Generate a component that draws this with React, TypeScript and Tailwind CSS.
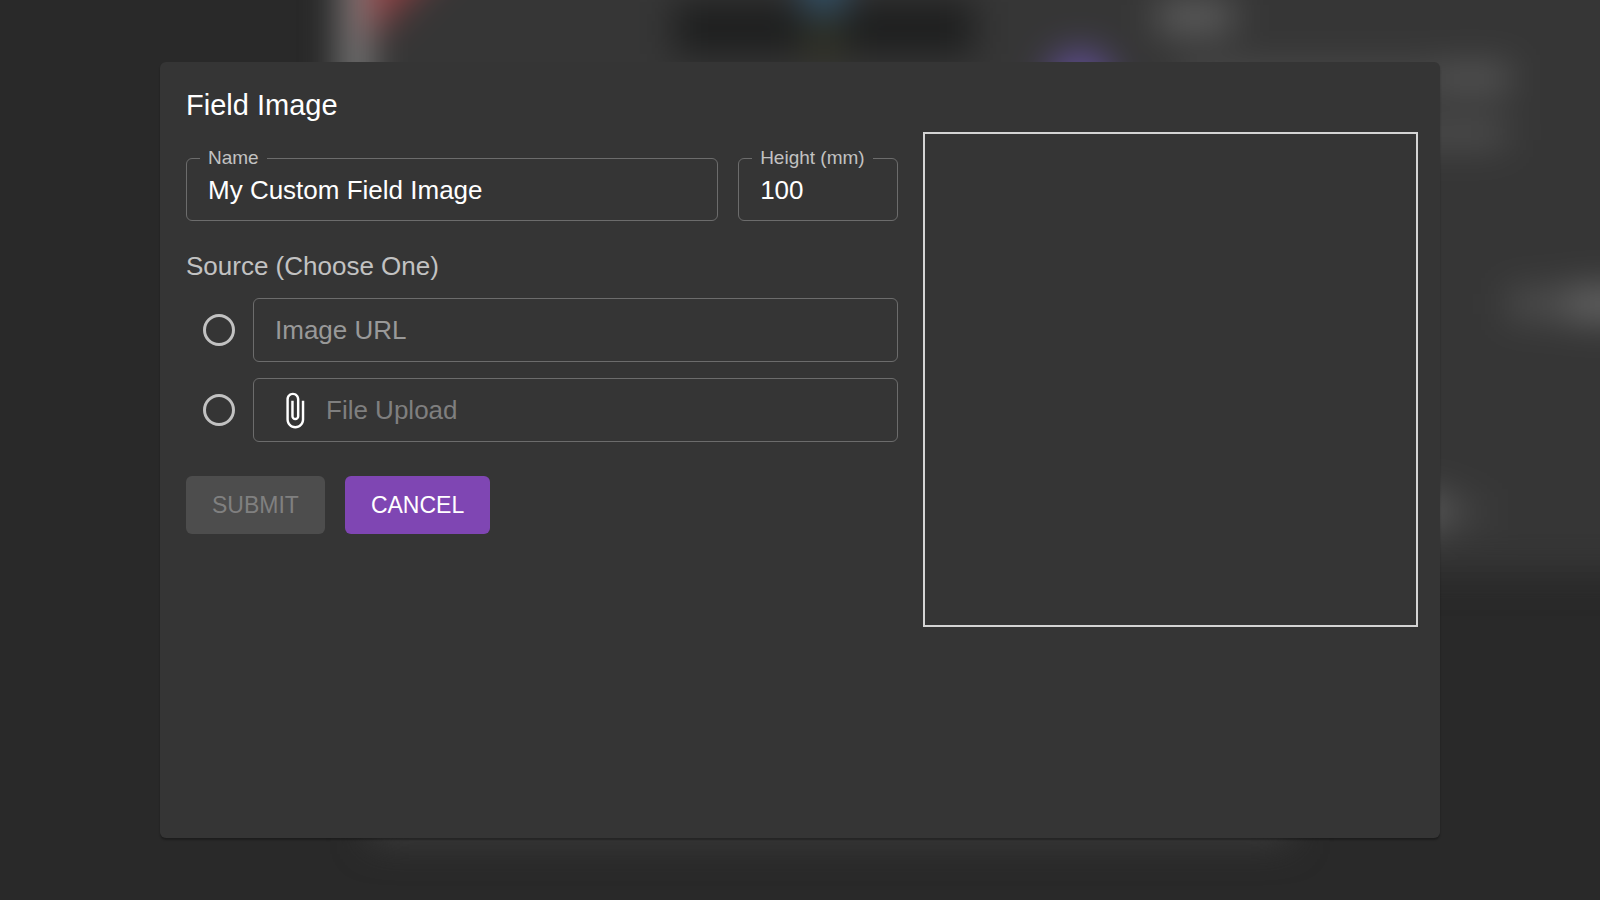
import { useState } from "react";

function Backdrop() {
  return (
    <svg
      aria-hidden="true"
      className="absolute inset-0 h-full w-full"
      viewBox="0 0 1600 900"
      preserveAspectRatio="none"
    >
      <defs>
        <filter
          id="soft"
          x="-200"
          y="-200"
          width="2000"
          height="1300"
          filterUnits="userSpaceOnUse"
          colorInterpolationFilters="sRGB"
        >
          <feGaussianBlur stdDeviation="18" />
        </filter>
      </defs>
      <rect width="1600" height="900" fill="#292929" />
      <g filter="url(#soft)">
        <rect x="340" y="-100" width="1500" height="672" fill="#363636" />
        <rect x="370" y="500" width="920" height="342" fill="#3c3c3c" />
        <rect x="342" y="-100" width="26" height="500" fill="#8a8a8a" />
        <path d="M366 -100H510L366 40Z" fill="#8e3f42" />
        <rect x="674" y="2" width="300" height="52" fill="#1d1e1e" />
        <rect x="803" y="-50" width="42" height="64" fill="#34556e" />
        <rect x="804" y="20" width="40" height="40" fill="#303124" />
        <circle cx="1080" cy="84" r="34" fill="#5f4d92" />
        <rect x="1158" y="2" width="74" height="30" fill="#626262" />
        <rect x="1180" y="66" width="330" height="24" fill="#505050" />
        <rect x="1440" y="66" width="70" height="24" fill="#5c5c5c" />
        <rect x="1250" y="120" width="256" height="26" fill="#505050" />
        <rect x="1508" y="290" width="60" height="28" fill="#505050" />
        <rect x="1568" y="288" width="90" height="32" fill="#686868" />
        <rect x="1370" y="494" width="80" height="34" fill="#5e5e5e" />
        <rect x="1452" y="500" width="36" height="24" fill="#424242" />
      </g>
    </svg>
  );
}

function OutlinedField({
  id,
  label,
  value,
  onChange,
  className,
}: {
  id: string;
  label: string;
  value: string;
  onChange: (value: string) => void;
  className: string;
}) {
  return (
    <fieldset className={`min-w-0 rounded-md border border-[#6c6c6c] px-[13px] ${className}`}>
      <legend className="px-2 text-[19px] leading-6 text-[#c2c2c2]">
        <label htmlFor={id}>{label}</label>
      </legend>
      <input
        id={id}
        value={value}
        onChange={(e) => onChange(e.target.value)}
        className="block h-[50px] w-full bg-transparent px-2 pb-[10px] text-[26px] leading-8 text-white outline-none"
      />
    </fieldset>
  );
}

const radioClass =
  "mr-[18px] ml-[17px] size-8 shrink-0 appearance-none rounded-full border-[3px] border-[#c2c2c2] checked:bg-[#7f46b3]";

export default function App() {
  const [name, setName] = useState("My Custom Field Image");
  const [height, setHeight] = useState("100");
  const [source, setSource] = useState("");

  return (
    <div className="relative flex min-h-screen overflow-hidden bg-[#292929] py-[62px] font-['Liberation_Sans',Arial,sans-serif]">
      <Backdrop />
      <section
        role="dialog"
        aria-labelledby="dialog-title"
        className="relative mx-auto w-4/5 rounded-md bg-[#353535] pt-[25px] pr-[22px] pb-6 pl-[26px] shadow-[0_2px_2px_rgba(0,0,0,0.3)]"
      >
        <h1 id="dialog-title" className="text-[29px] leading-9 text-white">
          Field Image
        </h1>
        <div className="mt-[9px] grid grid-cols-[59fr_41fr] gap-[25px]">
          <form className="min-w-0" onSubmit={(e) => e.preventDefault()}>
            <div className="mt-[14px] flex gap-5">
              <OutlinedField id="name" label="Name" value={name} onChange={setName} className="flex-1" />
              <OutlinedField
                id="height"
                label="Height (mm)"
                value={height}
                onChange={setHeight}
                className="w-40"
              />
            </div>
            <div role="radiogroup" aria-labelledby="source-label">
              <p id="source-label" className="mt-[29px] text-[26px] leading-8 text-[#c2c2c2]">
                Source (Choose One)
              </p>
              <div className="mt-4 flex items-center">
                <input
                  type="radio"
                  name="source"
                  aria-label="Use image URL"
                  checked={source === "url"}
                  onChange={() => setSource("url")}
                  className={radioClass}
                />
                <input
                  type="text"
                  aria-label="Image URL"
                  placeholder="Image URL"
                  className="h-16 min-w-0 flex-1 rounded-md border border-[#6c6c6c] bg-transparent px-[21px] text-[26px] text-white outline-none placeholder:text-[#999999]"
                />
              </div>
              <div className="mt-4 flex items-center">
                <input
                  type="radio"
                  name="source"
                  aria-label="Use file upload"
                  checked={source === "file"}
                  onChange={() => setSource("file")}
                  className={radioClass}
                />
                <button
                  type="button"
                  className="flex h-16 min-w-0 flex-1 items-center gap-3 rounded-md border border-[#6c6c6c] px-[21px] text-left text-[26px] text-[#7f7f7f]"
                >
                  <svg aria-hidden="true" viewBox="0 0 24 24" className="size-[39px] shrink-0" fill="#ffffff">
                    <path d="M16.5 6v11.5c0 2.21-1.79 4-4 4s-4-1.79-4-4V5c0-1.38 1.12-2.5 2.5-2.5s2.5 1.12 2.5 2.5v10.5c0 .55-.45 1-1 1s-1-.45-1-1V6H10v9.5c0 1.38 1.12 2.5 2.5 2.5s2.5-1.12 2.5-2.5V5c0-2.21-1.79-4-4-4S7 2.79 7 5v12.5c0 3.04 2.46 5.5 5.5 5.5s5.5-2.46 5.5-5.5V6h-1.5z" />
                  </svg>
                  File Upload
                </button>
              </div>
            </div>
            <div className="mt-[34px] flex gap-5">
              <button
                type="submit"
                disabled
                className="h-[58px] rounded-md bg-[#4d4d4d] px-[26px] text-[23px] text-[#808080]"
              >
                SUBMIT
              </button>
              <button type="button" className="h-[58px] rounded-md bg-[#7f46b3] px-[26px] text-[23px] text-white">
                CANCEL
              </button>
            </div>
          </form>
          <div className="aspect-square self-start border-2 border-[#d4d4d4]" />
        </div>
      </section>
    </div>
  );
}
